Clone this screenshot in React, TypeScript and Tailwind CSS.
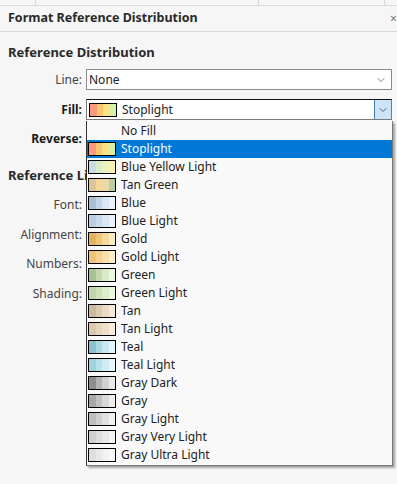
import { FC } from "react";
import { ChevronDown } from "lucide-react";

type FillType = {
  id: number;
  label: string;
  colors: string[] | null;
};

const fills: FillType[] = [
  { id: 0, label: "No Fill", colors: null },
  { id: 1, label: "Stoplight", colors: ["#f99a7e", "#fcc66f", "#fde285", "#d6f2a6"] },
  { id: 2, label: "Blue Yellow Light", colors: ["#cadde4", "#d9ecca", "#e9f3c0", "#fdf0b3"] },
  { id: 3, label: "Tan Green", colors: ["#dcc49c", "#f6d699", "#ead9a6", "#b9cc9f"] },
  { id: 4, label: "Blue", colors: ["#a9bdd3", "#c3d4e8", "#d8e6f5", "#e9f2fb"] },
  { id: 5, label: "Blue Light", colors: ["#bccde1", "#cadbee", "#dae7f6", "#e9f2fb"] },
  { id: 6, label: "Gold", colors: ["#e1b461", "#edc678", "#f6da9b", "#fcecc5"] },
  { id: 7, label: "Gold Light", colors: ["#efc478", "#f5d190", "#fadfaa", "#fdecc9"] },
  { id: 8, label: "Green", colors: ["#aac196", "#c3d8ac", "#d9ebc6", "#eaf6de"] },
  { id: 9, label: "Green Light", colors: ["#c0d5a9", "#cee3b9", "#ddeeca", "#ebf7de"] },
  { id: 10, label: "Tan", colors: ["#ccba9f", "#dccab0", "#ebdac5", "#f7eadb"] },
  { id: 11, label: "Tan Light", colors: ["#dbc8ae", "#e7d5bc", "#f0e0cb", "#f9eddd"] },
  { id: 12, label: "Teal", colors: ["#8cc1d0", "#aad7e4", "#c6e8f1", "#e1f6fb"] },
  { id: 13, label: "Teal Light", colors: ["#a0d3e0", "#b7e1eb", "#ceecf3", "#e4f7fb"] },
  { id: 14, label: "Gray Dark", colors: ["#8f8f8f", "#b3b3b3", "#d0d0d0", "#e9e9e9"] },
  { id: 15, label: "Gray", colors: ["#a7a7a7", "#c1c1c1", "#d9d9d9", "#ededed"] },
  { id: 16, label: "Gray Light", colors: ["#bebebe", "#d0d0d0", "#e1e1e1", "#f0f0f0"] },
  { id: 17, label: "Gray Very Light", colors: ["#d0d0d0", "#dddddd", "#e9e9e9", "#f4f4f4"] },
  { id: 18, label: "Gray Ultra Light", colors: ["#dfdfdf", "#e9e9e9", "#f1f1f1", "#f8f8f8"] },
];

const Swatch: FC<{ colors: string[] }> = ({ colors }) => (
  <div className="w-[28px] h-[14px] border border-black flex shrink-0">
    {colors.map((c, i) => (
      <span key={i} className="flex-1 h-full" style={{ backgroundColor: c }} />
    ))}
  </div>
);

const Label: FC<{ text: string; bold?: boolean }> = ({ text, bold }) => (
  <span
    className={`w-[82px] shrink-0 text-right text-[12px] ${
      bold ? "font-bold text-[#1a1a1a]" : "text-[#444]"
    }`}
  >
    {text}
  </span>
);

const App: FC = () => {
  return (
    <div
      className="relative w-[397px] h-[484px] overflow-hidden bg-[#f6f6f6] text-[#222]"
      style={{ fontFamily: '"Noto Sans", "DejaVu Sans", sans-serif' }}
    >
      {/* strip of the window above */}
      <div className="h-[6px] border-b border-[#dadada] flex">
        <span className="w-[36px] border-r border-[#dadada]" />
        <span className="w-[223px] border-r border-[#dadada]" />
        <span className="w-[126px] border-r border-[#dadada]" />
      </div>

      <div className="h-[26px] flex items-center justify-between pl-2 border-b border-[#d6d6d6]">
        <span className="text-[12.5px] font-bold text-[#2a2a2a]">
          Format Reference Distribution
        </span>
        <span className="w-[7px] text-[12px] leading-none text-[#777]">×</span>
      </div>

      <div className="pl-2 pt-[9px] text-[13px] font-bold text-[#2a2a2a] leading-[22px]">
        Reference Distribution
      </div>

      <div className="flex flex-col mt-[6px]">
        <div className="flex items-center gap-[4px] h-[21px]">
          <Label text="Line:" />
          <div className="w-[306px] h-[21px] bg-white border border-[#8a8a8a] flex items-center justify-between pl-[2px] pr-[4px] text-[12px]">
            <span>None</span>
            <ChevronDown size={12} strokeWidth={1.5} className="text-[#555]" />
          </div>
        </div>

        <div className="flex items-center gap-[4px] h-[21px] mt-[9px]">
          <Label text="Fill:" bold />
          <div className="w-[306px] h-[21px] bg-white border border-[#7a7a7a] border-t-[#111] flex items-center text-[12px]">
            <div className="flex-1 flex items-center gap-[5px] pl-[2px]">
              <Swatch colors={fills[1].colors as string[]} />
              <span>Stoplight</span>
            </div>
            <div className="w-[17px] h-full bg-[#cce4f7] border-l border-[#3c7fb1] flex items-center justify-center">
              <ChevronDown size={12} strokeWidth={1.5} className="text-[#333]" />
            </div>
          </div>
        </div>

        <div className="flex items-center h-[20px] mt-[9px]">
          <Label text="Reverse:" bold />
        </div>

        <div className="pl-2 mt-[15px] text-[13px] font-bold text-[#2a2a2a] leading-[22px]">
          Reference Line
        </div>

        <div className="flex flex-col gap-[11px] mt-[9px]">
          <div className="flex items-center h-[19px]">
            <Label text="Font:" />
          </div>
          <div className="flex items-center h-[19px]">
            <Label text="Alignment:" />
          </div>
          <div className="flex items-center h-[19px] mt-[-1px]">
            <Label text="Numbers:" />
          </div>
          <div className="flex items-center h-[19px]">
            <Label text="Shading:" />
          </div>
        </div>
      </div>

      {/* open fill list */}
      <ul className="absolute left-[86px] top-[121px] w-[307px] pt-[1px] pb-[1px] bg-[#f9f9f9] border border-[#7a7a7a] border-t-0 border-l-[#333] shadow-[2px_2px_2px_rgba(0,0,0,0.35)] text-[12px]">
        {fills.map((f) => (
          <li
            key={f.id}
            className={`h-[18px] flex items-center gap-[5px] pl-[1px] ${
              f.id === 1 ? "bg-[#0078d7] text-white" : "text-[#222]"
            }`}
          >
            {f.colors ? (
              <Swatch colors={f.colors} />
            ) : (
              <span className="w-[28px] shrink-0" />
            )}
            <span>{f.label}</span>
          </li>
        ))}
      </ul>
    </div>
  );
};

export default App;
